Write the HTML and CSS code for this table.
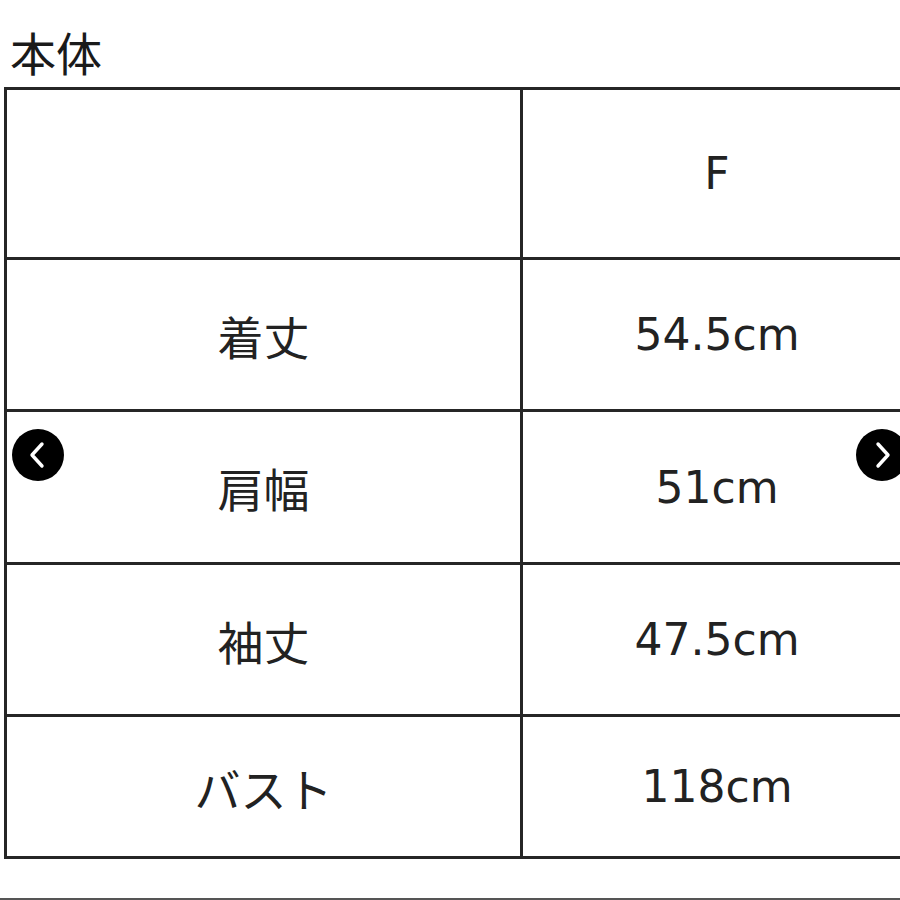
FILE: index.html
```html
<!DOCTYPE html>
<html lang="ja">
<head>
<meta charset="utf-8">
<link rel="stylesheet" href="styles.css">
</head>
<body>
<div class="page">
  <div class="title">本体</div>
  <table class="size">
    <tr class="r0"><td class="k"></td><td class="v">F</td></tr>
    <tr class="r1"><td class="k">着丈</td><td class="v">54.5cm</td></tr>
    <tr class="r2"><td class="k">肩幅</td><td class="v">51cm</td></tr>
    <tr class="r3"><td class="k">袖丈</td><td class="v">47.5cm</td></tr>
    <tr class="r4"><td class="k">バスト</td><td class="v">118cm</td></tr>
  </table>
  <div class="bottom-line"></div>
  <button class="nav prev" aria-label="prev">
    <svg viewBox="0 0 52 52" width="52" height="52"><path d="M30 15 L20 26 L30 37" fill="none" stroke="#fff" stroke-width="3.4" stroke-linecap="round" stroke-linejoin="round"/></svg>
  </button>
  <button class="nav next" aria-label="next">
    <svg viewBox="0 0 52 52" width="52" height="52"><path d="M22 15 L32 26 L22 37" fill="none" stroke="#fff" stroke-width="3.4" stroke-linecap="round" stroke-linejoin="round"/></svg>
  </button>
</div>
</body>
</html>
```

FILE: styles.css
```css
html, body {
  margin: 0;
  padding: 0;
  background: #fff;
}
body {
  width: 900px;
  height: 900px;
  overflow: hidden;
  font-family: "DejaVu Sans", "Noto Sans CJK JP", sans-serif;
  color: #222;
}
.page {
  position: relative;
  width: 900px;
  height: 900px;
  overflow: hidden;
}
.title {
  font-family: "Noto Sans CJK JP", sans-serif;
  font-size: 46px;
  line-height: 46px;
  padding: 28px 0 0 10px;
  height: 59px;
  color: #1a1a1a;
}
.size {
  border-collapse: collapse;
  margin-left: 4px;
  width: 910px;
  table-layout: fixed;
}
.size td {
  border: 3px solid #262626;
  text-align: center;
  vertical-align: middle;
  padding: 0;
  font-size: 44px;
  color: #222;
}
.size td.k {
  width: 513px;
  font-family: "Noto Sans CJK JP", sans-serif;
  font-size: 46px;
}
.size td.v {
  font-family: "DejaVu Sans", sans-serif;
}
.r0 { height: 170px; }
.r1 { height: 152px; }
.r2 { height: 153px; }
.r3 { height: 152px; }
.r4 { height: 142px; }
.bottom-line {
  margin-top: 39px;
  height: 2px;
  background: #555;
}
.nav {
  position: absolute;
  top: 429px;
  width: 52px;
  height: 52px;
  border-radius: 50%;
  background: #000;
  border: none;
  padding: 0;
  display: flex;
  align-items: center;
  justify-content: center;
}
.nav svg { display: block; }
.prev { left: 12px; }
.next { left: 856px; }
```
